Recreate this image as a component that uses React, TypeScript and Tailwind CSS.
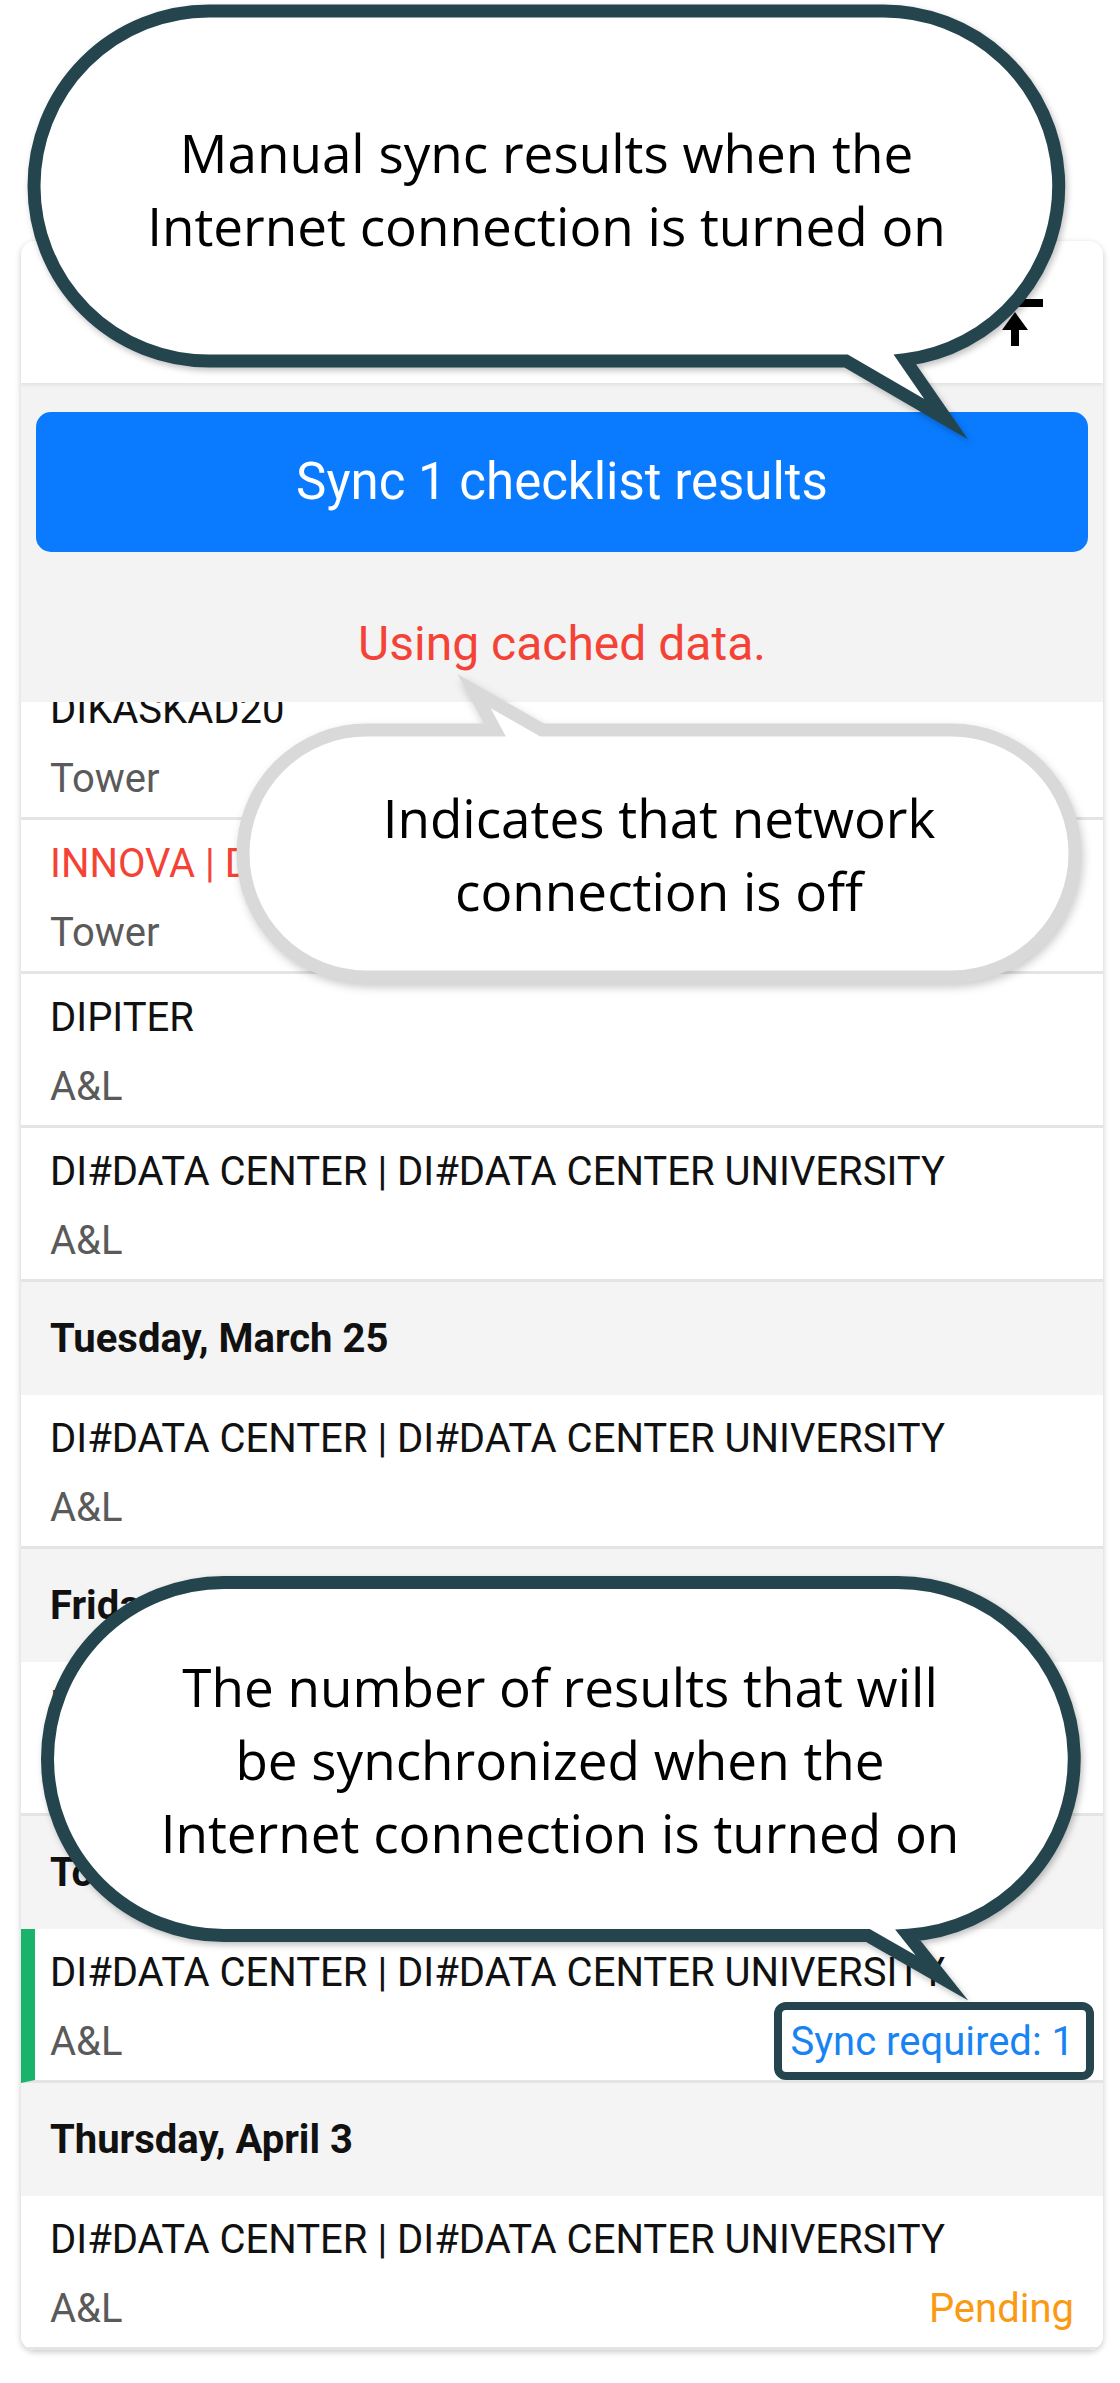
import React from 'react';

const INK = '#24454d';
const DC = 'DI#DATA CENTER | DI#DATA CENTER UNIVERSITY';

type ResultItem = {
  type: 'row';
  title: string;
  sub: string;
  danger?: boolean;
  unsynced?: boolean;
  status?: 'sync' | 'pending';
};

type DateItem = { type: 'date'; label: string };

const items: (ResultItem | DateItem)[] = [
  { type: 'row', title: 'DIKASKAD20', sub: 'Tower' },
  { type: 'row', title: 'INNOVA | DIKASKAD20', sub: 'Tower', danger: true },
  { type: 'row', title: 'DIPITER', sub: 'A&L' },
  { type: 'row', title: DC, sub: 'A&L' },
  { type: 'date', label: 'Tuesday, March 25' },
  { type: 'row', title: DC, sub: 'A&L' },
  { type: 'date', label: 'Friday, March 28' },
  { type: 'row', title: DC, sub: 'A&L' },
  { type: 'date', label: 'Today' },
  { type: 'row', title: DC, sub: 'A&L', unsynced: true, status: 'sync' },
  { type: 'date', label: 'Thursday, April 3' },
  { type: 'row', title: DC, sub: 'A&L', status: 'pending' },
];

const ResultRow: React.FC<{ row: ResultItem }> = ({ row }) => {
  return (
    <div
      className={`h-[154px] border-b-[3px] border-b-[#e4e4e4] bg-white pt-[20px] pr-[29px] ${
        row.unsynced ? 'border-l-[14px] border-l-[#19b36b] pl-[15px]' : 'pl-[29px]'
      }`}
    >
      <div
        className={`whitespace-nowrap text-[40px] leading-[48px] ${
          row.danger ? 'text-[#f44336]' : 'text-[#111111]'
        }`}
      >
        {row.title}
      </div>
      <div className="mt-[21px] flex items-center justify-between text-[40px] leading-[48px]">
        <span className="text-[#5a5a5a]">{row.sub}</span>
        {row.status === 'sync' && <span className="text-[#1883f3]">Sync required: 1</span>}
        {row.status === 'pending' && <span className="text-[#fa9a14]">Pending</span>}
      </div>
    </div>
  );
};

const DateHeader: React.FC<{ label: string }> = ({ label }) => (
  <div className="flex h-[113px] items-center bg-[#f4f4f4] px-[29px] text-[40px] font-bold text-[#111111]">
    {label}
  </div>
);

const UploadIcon = () => (
  <svg width="56" height="52" viewBox="0 0 56 52" fill="#000">
    <rect x="0" y="4" width="56" height="8" />
    <polygon points="28,17 41,35 15,35" />
    <rect x="24" y="34" width="8" height="17" />
  </svg>
);

// annotation bubbles drawn over the screenshot
const Callouts = () => (
  <div className="pointer-events-none absolute inset-0 z-20">
    <svg width="1120" height="2383" className="absolute left-0 top-0">
      <g fill="#ffffff" strokeWidth={13} strokeLinejoin="miter" strokeMiterlimit={12}>
        <path
          className="drop-shadow-[2px_3px_3px_rgba(0,0,0,0.25)]"
          stroke={INK}
          d="M 209 11 H 883.5 A 175 175 0 0 1 905 359.7 L 946 419 L 846 361 H 209 A 175 175 0 0 1 209 11 Z"
        />
        <path
          className="drop-shadow-[2px_4px_4px_rgba(0,0,0,0.2)]"
          stroke="#d9d9d9"
          d="M 366.5 730 H 495 L 474 691 L 542 730 H 951.5 A 123.5 123.5 0 0 1 951.5 977 H 366.5 A 123.5 123.5 0 0 1 366.5 730 Z"
        />
        <path
          className="drop-shadow-[2px_3px_3px_rgba(0,0,0,0.25)]"
          stroke={INK}
          d="M 224 1582.5 H 897 A 176.5 176.5 0 0 1 908 1935.2 L 942 1978 L 868 1935.5 H 224 A 176.5 176.5 0 0 1 224 1582.5 Z"
        />
      </g>
    </svg>

    <div className="absolute left-[34px] top-[14px] flex h-[350px] w-[1025px] items-center justify-center whitespace-nowrap text-center font-['Open_Sans',sans-serif] text-[53px] leading-[73px] text-black">
      <p>
        Manual sync results when the
        <br />
        Internet connection is turned on
      </p>
    </div>

    <div className="absolute left-[243px] top-[730px] flex h-[247px] w-[832px] items-center justify-center whitespace-nowrap text-center font-['Open_Sans',sans-serif] text-[53px] leading-[73px] text-black">
      <p>
        Indicates that network
        <br />
        connection is off
      </p>
    </div>

    <div className="absolute left-[47px] top-[1583px] flex h-[353px] w-[1026px] items-center justify-center whitespace-nowrap text-center font-['Open_Sans',sans-serif] text-[53px] leading-[73px] text-black">
      <p>
        The number of results that will
        <br />
        be synchronized when the
        <br />
        Internet connection is turned on
      </p>
    </div>

    <div className="absolute left-[774px] top-[2002px] h-[78px] w-[320px] rounded-[12px] border-[8px] border-[#24454d]" />
  </div>
);

export default function App() {
  return (
    <div className="relative h-[2383px] w-[1120px] overflow-hidden bg-white font-['Roboto',sans-serif]">
      <div className="pl-[21px] pt-[241px]">
        <div className="w-[1082px] overflow-hidden rounded-[14px] bg-white shadow-[0_2px_6px_rgba(0,0,0,0.22)]">
          {/* Top bar */}
          <div className="relative z-10 flex h-[142px] items-start justify-end bg-white pr-[60px] pt-[54px] shadow-[0_2px_4px_rgba(0,0,0,0.08)]">
            <UploadIcon />
          </div>

          {/* Offline sync panel */}
          <div className="bg-[#f3f3f3] px-[15px] pb-[30px] pt-[29px]">
            <button className="flex h-[140px] w-full items-center justify-center rounded-[15px] bg-[#0a7bff] text-[51px] text-white">
              Sync 1 checklist results
            </button>
            <p className="mt-[64px] text-center text-[48px] leading-[56px] text-[#f44336]">
              Using cached data.
            </p>
          </div>

          {/* Results list, scrolled a little */}
          <div className="overflow-hidden">
            <div className="-mt-[36px]">
              {items.map((it, i) =>
                it.type === 'date' ? (
                  <DateHeader key={i} label={it.label} />
                ) : (
                  <ResultRow key={i} row={it} />
                )
              )}
            </div>
          </div>
        </div>
      </div>

      <Callouts />
    </div>
  );
}
